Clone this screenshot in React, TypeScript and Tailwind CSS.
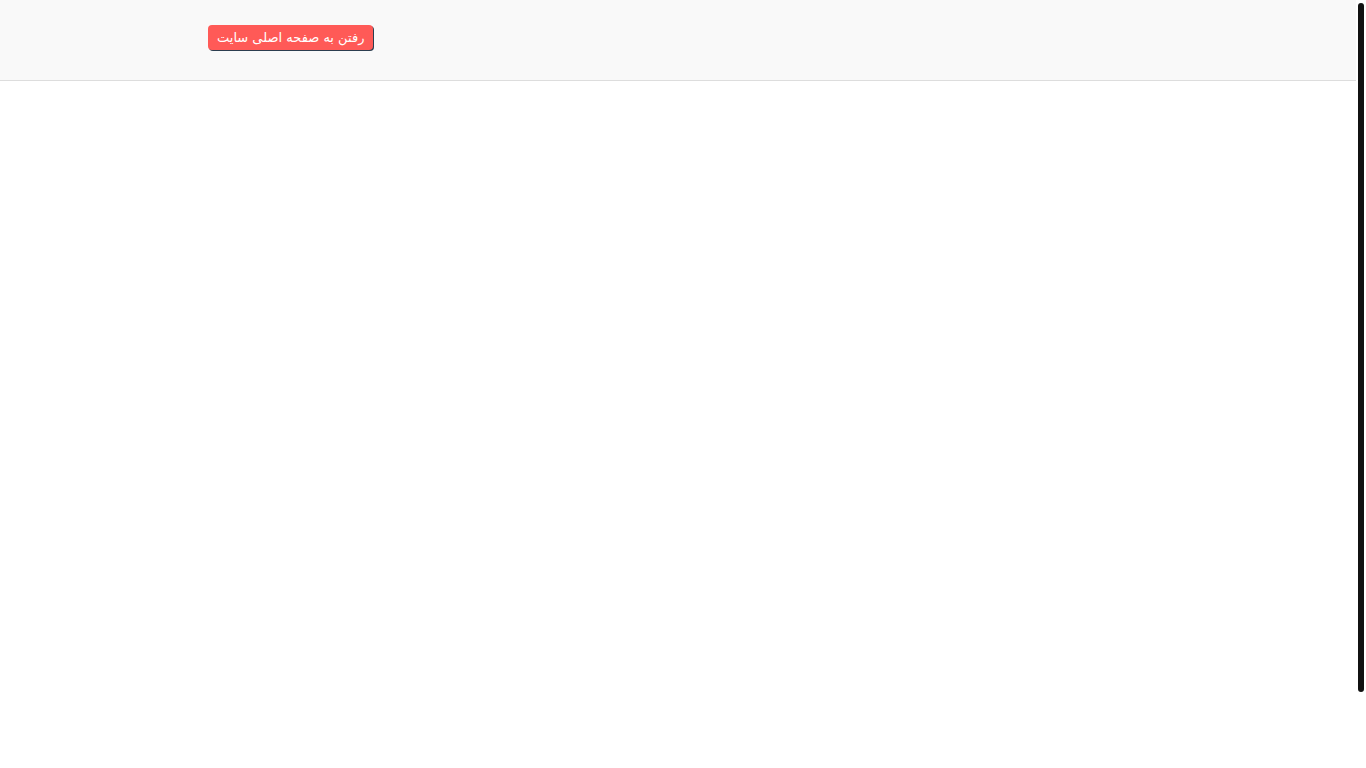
export default function App() {
  return (
    <div
      className="flex h-screen overflow-hidden bg-white"
      style={{ fontFamily: '"DejaVu Sans", "Noto Sans", sans-serif' }}
    >
      <div dir="rtl" className="min-w-0 flex-1">
        <header className="h-[81px] border-b border-[#dddddd] bg-[#f9f9f9]">
          <div className="mx-auto flex h-full w-[940px] items-center justify-end">
            <a
              href="#"
              className="mb-[6px] rounded-[4px] bg-[#ff5a57] px-[9px] py-[4px] text-[13px] leading-[17px] text-white shadow-[1px_1px_0_#2c3e50]"
            >
              رفتن به صفحه اصلی سایت
            </a>
          </div>
        </header>
      </div>
      {/* scrollbar */}
      <div className="flex w-[10px] flex-col bg-white px-[2px] pt-[3px]">
        <div className="h-[689px] rounded-[3px] bg-[#111111]" />
      </div>
    </div>
  );
}
